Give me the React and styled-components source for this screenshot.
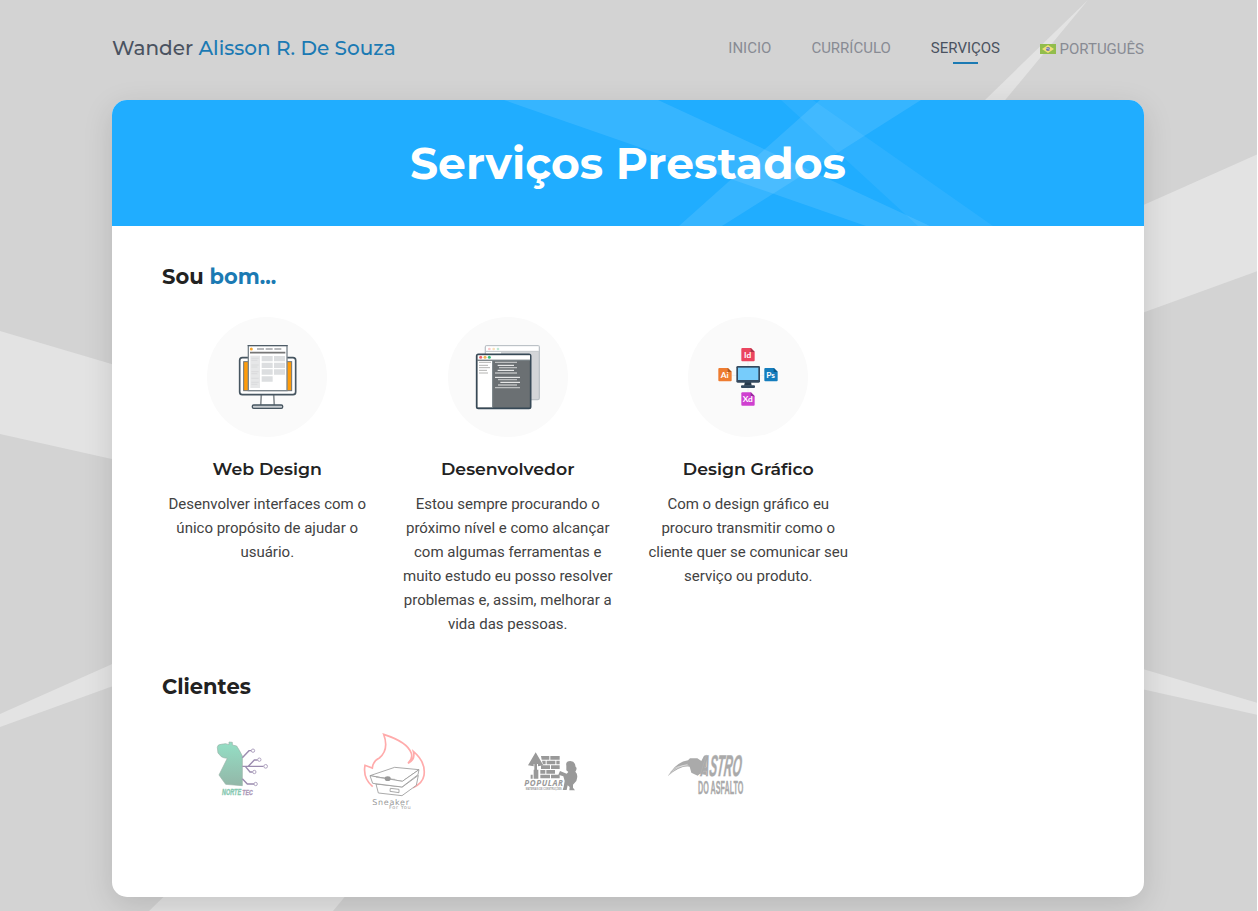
import React from "react";
import styled, { createGlobalStyle } from "styled-components";

const heading = `Montserrat, Inter, "Open Sans", sans-serif`;

const GlobalStyle = createGlobalStyle`
  * { box-sizing: border-box; }
  body { margin: 0; background: #fff; overflow: hidden; font-family: Roboto, sans-serif; color: #424242; }
  h1, h2, h3, p { margin: 0; }
`;

const Page = styled.div`
  position: relative;
  width: 1257px;
  height: 911px;
  background: #d3d3d3;
  overflow: hidden;
`;
const PageRays = styled.svg`
  position: absolute;
  inset: 0;
`;
const Container = styled.div`
  position: relative;
  width: 1032px;
  margin-left: 112px;
`;
const Header = styled.header`
  height: 100px;
  padding-bottom: 4px;
  display: flex;
  align-items: center;
  justify-content: space-between;
`;
const Brand = styled.div`
  font: 500 20px/28px ${heading};
  color: #4a5260;
  white-space: nowrap;
`;
const Accent = styled.span`
  color: #1b7ab3;
`;
const Nav = styled.nav`
  display: flex;
  gap: 40px;
  margin-top: 2px;
`;
const NavLink = styled.a`
  position: relative;
  display: flex;
  align-items: center;
  gap: 3.5px;
  padding-top: ${(p) => (p.$lowered ? "1px" : "0")};
  padding-bottom: ${(p) => (p.$lowered ? "1px" : "2px")};
  font-size: 15px;
  line-height: 20px;
  white-space: nowrap;
  color: ${(p) => (p.$active ? "#4a5260" : "#888b93")};
  &::after {
    content: "";
    display: ${(p) => (p.$active ? "block" : "none")};
    position: absolute;
    left: calc(50% - 12px);
    bottom: -4px;
    width: 25px;
    height: 2px;
    background: #1b7ab3;
  }
`;
const Card = styled.main`
  height: 797px;
  border-radius: 15px;
  background: #fff;
  overflow: hidden;
  box-shadow: 0 8px 30px rgba(0, 0, 0, 0.13);
`;
const Banner = styled.div`
  position: relative;
  height: 126px;
  display: flex;
  justify-content: center;
  align-items: center;
  background: #20adff;
`;
const BannerRays = styled.svg`
  position: absolute;
  inset: 0;
`;
const Title = styled.h1`
  position: relative;
  font: 700 44px/54px ${heading};
  color: #fff;
  letter-spacing: 0.05px;
  white-space: nowrap;
`;
const Body = styled.div`
  padding: 37px 50px 0;
`;
const SectionTitle = styled.h2`
  font: 700 21px/28px ${heading};
  color: #222;
`;
const Services = styled.div`
  display: grid;
  grid-template-columns: repeat(4, 1fr);
  gap: 30px;
  margin: 26px 0 37px;
`;
const Service = styled.article`
  display: flex;
  flex-direction: column;
  align-items: center;
  text-align: center;
`;
const IconCircle = styled.div`
  width: 120px;
  height: 120px;
  border-radius: 50%;
  background: #fafafa;
`;
const ServiceTitle = styled.h3`
  margin: 22px 0 13px;
  font: 600 17.35px/20px ${heading};
  color: #222;
`;
const ServiceText = styled.p`
  font-size: 15px;
  line-height: 24px;
  white-space: nowrap;
`;
const Clients = styled.div`
  display: grid;
  grid-template-columns: repeat(6, 1fr);
  margin-top: 24px;
`;
const Client = styled.svg`
  width: 100%;
  height: 90px;
`;

const Flag = () => (
  <svg width="16" height="10" viewBox="0 0 16 10">
    <rect width="16" height="10" fill="#92bd4c" />
    <path d="M8 1 14 5 8 9 2 5Z" fill="#f1df79" />
    <circle cx="8" cy="5" r="2.1" fill="#6f76ae" />
    <path d="M6 4.5q2-.4 4 1" stroke="#dce0e6" strokeWidth=".6" fill="none" />
  </svg>
);

const WebIcon = () => (
  <svg width="120" height="120" viewBox="21 21 360 360">
    <path d="M184 254 182 287H223L221 254" fill="#fff" stroke="#8c9296" strokeWidth="5" />
    <rect x="157" y="285" width="91" height="10" rx="4" fill="#c6cbcf" stroke="#465560" strokeWidth="4" />
    <rect x="119" y="143" width="168" height="111" rx="8" fill="#fff" stroke="#465560" strokeWidth="5" />
    <rect x="131" y="155" width="144" height="87" fill="#ff9c0a" stroke="#6d747a" strokeWidth="3" />
    <path d="M145 242V107H261V242Z" fill="#fff" stroke="#7b858c" strokeWidth="4" />
    <path d="M143 107H263" stroke="#465560" strokeWidth="3" />
    <circle cx="154" cy="117" r="4.5" fill="#f6a52d" />
    <path d="M171 117H192M197 117H218M223 117H244" stroke="#a0a3a6" strokeWidth="4" />
    <path d="M150 128H256" stroke="#777" strokeWidth="5" />
    <path d="M151 137H180V234H151Z" fill="#e6e7e8" />
    <path d="M154 145H176M154 151H172M154 165H176M154 171H172M154 185H176M154 191H172M154 205H176M154 217H176M154 223H172" stroke="#d3d5d7" strokeWidth="2" />
    <path d="M185 138H218V154H185ZM222 138H255V154H222ZM185 158H218V174H185ZM222 158H255V174H222ZM185 178H218V194H185ZM222 178H255V194H222ZM185 199H218V215H185Z" fill="#dcdee0" />
  </svg>
);

const CodeIcon = () => (
  <svg width="120" height="120" viewBox="24 21 360 360">
    <rect x="136" y="107" width="162" height="162" rx="5" fill="#d3d5d8" stroke="#bcc2c7" strokeWidth="4" />
    <path d="M138 109H296V123H138ZM138 126H183V267H138Z" fill="#fff" />
    <path d="M138 124H296" stroke="#c6cacd" strokeWidth="3" />
    <circle cx="148" cy="117" r="4" fill="#fac8ca" /><circle cx="161" cy="117" r="4" fill="#fae1bb" /><circle cx="174" cy="117" r="4" fill="#bfe8d5" />
    <rect x="110" y="133" width="162" height="162" rx="5" fill="#6b7073" stroke="#374957" strokeWidth="5" />
    <path d="M113 136H270V149H113ZM113 152H157V292H113Z" fill="#fff" />
    <path d="M112 151H270M158 152V293" stroke="#7b8489" strokeWidth="3" />
    <circle cx="122" cy="142" r="4.5" fill="#ef6269" /><circle cx="135" cy="142" r="4.5" fill="#efb44e" /><circle cx="148" cy="142" r="4.5" fill="#35bd7d" />
    <path d="M117 157H153M117 166H144M117 173H150M117 181H141M117 189H144" stroke="#b4b4b2" strokeWidth="3" />
    <path d="M165 157H231M177 173H231M165 189H231M174 209H231M174 225H231M165 233H240" stroke="#bdbfc0" strokeWidth="4" />
    <path d="M173 166H222M173 181H222M165 202H240M181 217H240" stroke="#fff" strokeWidth="3" />
  </svg>
);

const appFiles = [
  { x: 184, y: 114, label: "Id", fill: "#eb455f", fold: "#a73349" },
  { x: 115, y: 174, label: "Ai", fill: "#ee7c30", fold: "#ac5a24" },
  { x: 253, y: 174, label: "Ps", fill: "#147dbd", fold: "#0c5787" },
  { x: 184, y: 247, label: "Xd", fill: "#cf40d0", fold: "#932b99" },
];

const DesignIcon = () => (
  <svg width="120" height="120" viewBox="24 21 360 360">
    <path d="M204 154V247M155 196H253" stroke="#f0f0f0" strokeWidth="3" />
    {appFiles.map((f) => (
      <g key={f.label} transform={`translate(${f.x} ${f.y})`}>
        <path d="M3 0H29L40 11V37Q40 40 37 40H3Q0 40 0 37V3Q0 0 3 0Z" fill={f.fill} />
        <path d="M28 0 40 12H28Z" fill={f.fold} />
        <text x="19" y="30" textAnchor="middle" fontFamily="Lato" fontWeight="700" fontSize="25" fill="#fff">{f.label}</text>
      </g>
    ))}
    <path d="M195 215H213L215 227H192Z" fill="#26394b" />
    <rect x="183" y="226" width="42" height="8" rx="3" fill="#34495e" />
    <rect x="169" y="168" width="71" height="50" rx="4" fill="#34495e" />
    <path d="M174 173H235V210H174Z" fill="#77ccfb" />
  </svg>
);

const NorteTec = () => (
  <Client viewBox="-114 0 466 270">
    <defs>
      <linearGradient id="map" x1="0" y1="0" x2="0" y2="1">
        <stop offset="0" stopColor="#94dfc5" /><stop offset="1" stopColor="#93b7a8" />
      </linearGradient>
    </defs>
    <path d="M52 67Q53 58 63 58L77 56 87 59V51L97 52V60L110 63 118 76 127 93V182L77 178 57 150 82 100Q70 99 64 95L54 84Z" fill="url(#map)" stroke="#99b2a8" strokeWidth="2" />
    <path d="M127 98 147 77H154M127 124H191M145 124 163 105H173M136 124 150 141H158M127 161 142 177H162" fill="none" stroke="#9b8caf" strokeWidth="4.2" />
    <g fill="#fff" stroke="#a496b6" strokeWidth="2.6"><circle cx="159" cy="77" r="5" /><circle cx="178" cy="104" r="5" /><circle cx="197" cy="124" r="5.5" /><circle cx="163" cy="141" r="5" /><circle cx="167" cy="177" r="5" /></g>
    <g fontFamily="Liberation Sans" fontWeight="700" fontStyle="italic" strokeWidth=".7">
      <text transform="translate(66 209) scale(1 1.5)" fontSize="16.5" fill="#86c8b0" stroke="#86c8b0">NORTE</text>
      <text transform="translate(127 209) scale(1 1.5)" fontSize="15.5" fill="#ac98b7" stroke="#ac98b7">TEC</text>
    </g>
  </Client>
);

const Sneaker = () => (
  <Client viewBox="-98 0 466 270">
    <path d="M69 185Q39 160 46 121L68 129Q70 108 89 99Q119 74 102 28Q174 51 185 85Q190 101 175 115Q198 104 191 79Q229 111 223 151Q219 175 190 188" fill="none" stroke="#ffabab" strokeWidth="5" />
    <g fill="#fff" stroke="#999" strokeWidth="2.5" strokeLinejoin="round">
      <path d="M79 177 86 204 157 212 200 181 206 151 158 186Z" />
      <path d="M61 152 135 127 208 134 158 169Z" />
      <path d="M61 152 69 175 157 186 205 149 208 134 158 169Z" />
      <path d="M122 190 148 193V203L121 199Z" />
    </g>
    <path d="M79 157 136 163" stroke="#aaa" strokeWidth="2" /><ellipse cx="114" cy="161" rx="9" ry="7" fill="#999" />
    <g fontFamily="'DejaVu Sans'" fill="#999">
      <text x="68" y="240" fontSize="24" textLength="110">Sneaker</text>
      <text x="118" y="253" fontSize="15" textLength="65">For You</text>
    </g>
  </Client>
);

const Popular = () => (
  <Client viewBox="-112 -30 466 270" fill="#999">
    <path d="M76 52 99 91 83 94V87H70V94L53 91Z" />
    <path d="M72 84H80V104H84V131H70V104H72Z" />
    <path d="M92 63H117V74H94ZM120 63H148V74H120ZM95 77H106V88H98ZM109 77H135V88H109ZM138 77H148V88H138ZM92 91H119V102H92ZM122 91H148V102H122ZM90 105H105V116H90ZM108 105H134V116H108ZM90 119H119V130H90ZM122 119H148V130H122ZM61 119H67V131H61Z" />
    <path d="M168 92Q165 78 180 78Q195 79 196 96Q202 99 195 110Q205 118 198 138L188 149V158L194 166H177L178 156 172 151 169 165H157L160 155 163 138 159 124 144 119 149 108 169 116 174 111 168 106Z" />
    <text x="42" y="153" fontFamily="Open Sans" fontWeight="700" fontStyle="italic" fontSize="24" textLength="116" lengthAdjust="spacing">POPULAR</text>
    <text x="46" y="165" fontFamily="Liberation Sans" fontWeight="700" fontSize="9" textLength="108" lengthAdjust="spacingAndGlyphs">MATERIAIS DE CONSTRUÇÕES</text>
  </Client>
);

const Astro = () => (
  <Client viewBox="-81 -45 466 270" fill="#aaa">
    <path d="M38 109Q61 67 99 61L105 55 127 55 139 63 147 47 156 44 153 105 135 101 128 107 109 98 104 80Q74 76 38 109Z" />
    <path d="M48 92Q68 74 101 78M41 104Q63 80 98 73" stroke="#fff" strokeWidth="1.3" fill="none" />
    <g fontFamily="Liberation Sans" fontWeight="700">
      <text transform="translate(136 109) skewX(-6) scale(1 2.6)" fontStyle="italic" fontSize="34.5" stroke="#ccc" strokeWidth="1" paintOrder="stroke">ASTRO</text>
      <text transform="translate(129 163) scale(1 2.5)" fontSize="21.6" stroke="#aaa" strokeWidth=".4">DO ASFALTO</text>
    </g>
  </Client>
);

const services = [
  { title: "Web Design", Icon: WebIcon, lines: ["Desenvolver interfaces com o", "único propósito de ajudar o", "usuário."] },
  { title: "Desenvolvedor", Icon: CodeIcon, lines: ["Estou sempre procurando o", "próximo nível e como alcançar", "com algumas ferramentas e", "muito estudo eu posso resolver", "problemas e, assim, melhorar a", "vida das pessoas."] },
  { title: "Design Gráfico", Icon: DesignIcon, lines: ["Com o design gráfico eu", "procuro transmitir como o", "cliente quer se comunicar seu", "serviço ou produto."] },
];

export default function App() {
  return (
    <Page>
      <GlobalStyle />
      <PageRays width="1258" height="911" fill="#e3e3e3">
        <path d="M1088 0 149 911H333ZM1258 154 0 714V727L1258 271ZM0 331 1258 703V715L0 434Z" />
      </PageRays>
      <Container>
        <Header>
          <Brand>Wander <Accent>Alisson R. De Souza</Accent></Brand>
          <Nav>
            <NavLink>INICIO</NavLink>
            <NavLink>CURRÍCULO</NavLink>
            <NavLink $active>SERVIÇOS</NavLink>
            <NavLink $lowered><Flag />PORTUGUÊS</NavLink>
          </Nav>
        </Header>
        <Card>
          <Banner>
            <BannerRays width="1032" height="126" fill="#fff">
              <path d="M392 0H546L818 126H754Z" opacity=".1" />
              <path d="M708 0H809L610 126H567Z" opacity=".1" />
              <path d="M669 0H701L881 126H806Z" opacity=".06" />
            </BannerRays>
            <Title>Serviços Prestados</Title>
          </Banner>
          <Body>
            <SectionTitle>Sou <Accent>bom...</Accent></SectionTitle>
            <Services>
              {services.map(({ title, Icon, lines }) => (
                <Service key={title}>
                  <IconCircle><Icon /></IconCircle>
                  <ServiceTitle>{title}</ServiceTitle>
                  <ServiceText>
                    {lines.map((line) => <React.Fragment key={line}>{line}<br /></React.Fragment>)}
                  </ServiceText>
                </Service>
              ))}
            </Services>
            <SectionTitle>Clientes</SectionTitle>
            <Clients><NorteTec /><Sneaker /><Popular /><Astro /></Clients>
          </Body>
        </Card>
      </Container>
    </Page>
  );
}
